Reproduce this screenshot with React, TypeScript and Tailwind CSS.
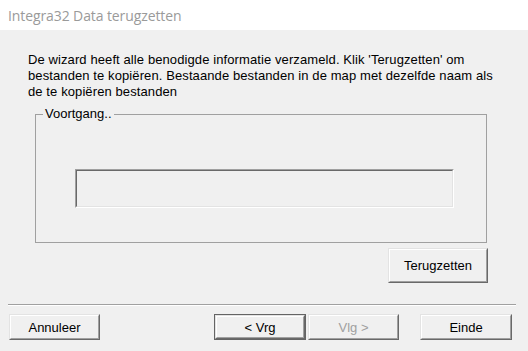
import React from "react";

function WinButton({
  children,
  className = "",
  disabled = false,
  isDefault = false,
}: {
  children: React.ReactNode;
  className?: string;
  disabled?: boolean;
  isDefault?: boolean;
}) {
  const inner = (
    <div className="flex-1 flex border-t border-l border-t-[#e3e3e3] border-l-[#e3e3e3] border-b border-r border-b-[#696969] border-r-[#696969]">
      <div
        className={
          "flex-1 flex items-center justify-center border-t border-l border-t-white border-l-white border-b border-r border-b-[#a0a0a0] border-r-[#a0a0a0] " +
          (disabled ? "text-[#a0a0a0]" : "text-black")
        }
      >
        {children}
      </div>
    </div>
  );
  return (
    <div
      className={
        "flex bg-[#f0f0f0] text-[13px] leading-none " +
        (isDefault ? "border border-[#646464] " : "") +
        className
      }
    >
      {inner}
    </div>
  );
}

export default function App() {
  return (
    <div
      className="w-[528px] h-[351px] flex flex-col bg-[#f0f0f0] overflow-hidden"
      style={{ fontFamily: '"Liberation Sans", Arial, sans-serif' }}
    >
      <div className="h-[30px] bg-white flex items-center pl-[8px] shrink-0">
        <span
          className="text-[14px] text-[#9a9a9a] tracking-[-0.1px]"
          style={{ fontFamily: '"Open Sans", "Noto Sans", sans-serif' }}
        >
          Integra32 Data terugzetten
        </span>
      </div>
      <div className="flex-1 flex flex-col text-black">
        <div className="pl-[28px] pr-[20px] pt-[22px] text-[13px] leading-[16px] tracking-[0.1px] whitespace-nowrap">
          De wizard heeft alle benodigde informatie verzameld. Klik 'Terugzetten' om
          <br />
          bestanden te kopiëren. Bestaande bestanden in de map met dezelfde naam als
          <br />
          de te kopiëren bestanden
        </div>
        <div className="relative ml-[35px] mt-[14px] w-[452px] h-[129px] border border-[#a0a0a0]">
          <span className="absolute -top-[9px] left-[7px] bg-[#f0f0f0] px-[2px] text-[13px] leading-[16px]">
            Voortgang..
          </span>
          <div className="ml-[39px] mt-[54px] w-[379px] h-[39px] flex border-t border-l border-t-[#a0a0a0] border-l-[#a0a0a0] border-b border-r border-b-white border-r-white">
            <div className="flex-1 border-t border-l border-t-[#696969] border-l-[#696969] border-b border-r border-b-[#e3e3e3] border-r-[#e3e3e3]" />
          </div>
        </div>
        <div className="flex justify-end pr-[40px] mt-[5px]">
          <WinButton className="w-[100px] h-[35px]">Terugzetten</WinButton>
        </div>
        <div className="ml-[8px] mr-[12px] mt-[21px] h-[2px] border-t border-t-[#a0a0a0] border-b border-b-white" />
        <div className="flex mt-[8px] pl-[9px]">
          <WinButton className="w-[91px] h-[26px]">Annuleer</WinButton>
          <WinButton isDefault className="w-[92px] h-[26px] ml-[114px]">
            &lt; Vrg
          </WinButton>
          <WinButton disabled className="w-[91px] h-[26px] ml-[2px]">
            Vlg &gt;
          </WinButton>
          <WinButton className="w-[92px] h-[26px] ml-[21px]">Einde</WinButton>
        </div>
      </div>
    </div>
  );
}
